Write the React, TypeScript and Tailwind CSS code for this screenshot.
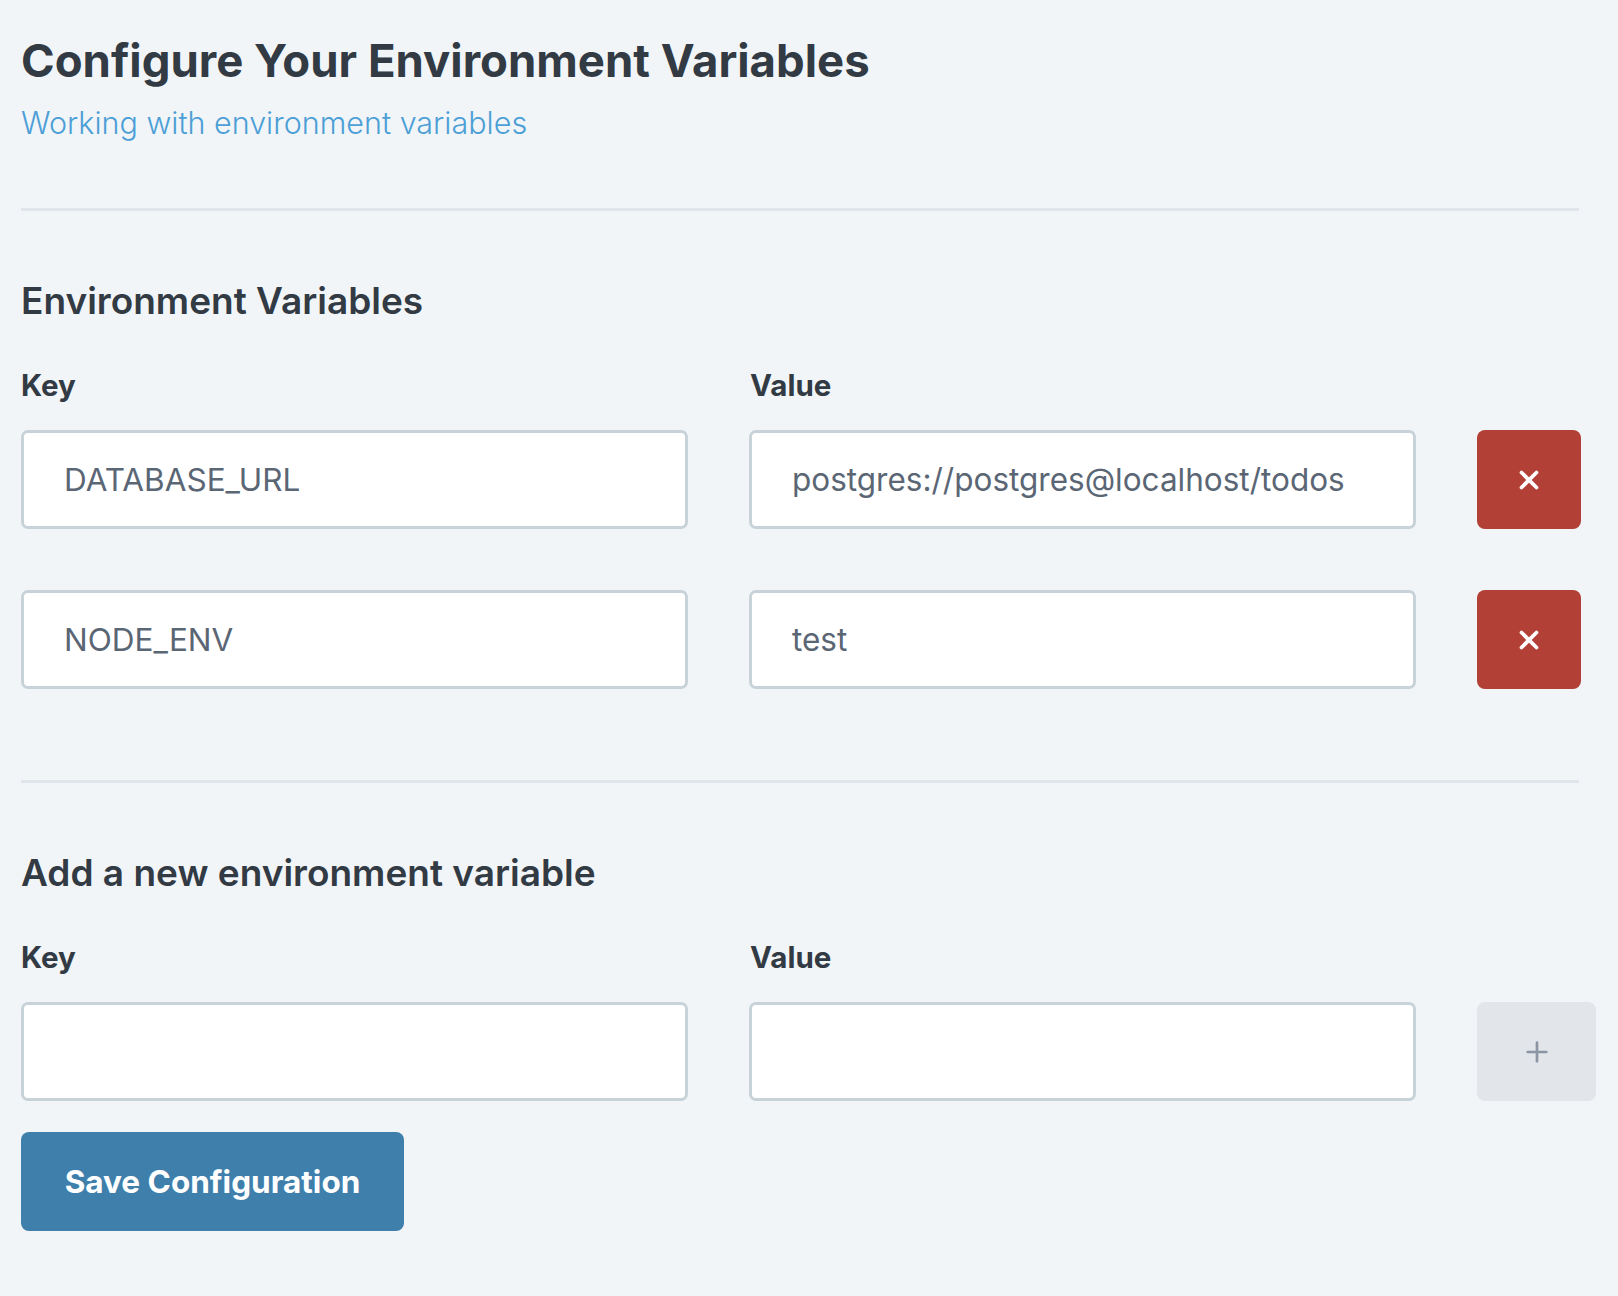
import { X, Plus } from 'lucide-react';

const rows = [
  { key: 'DATABASE_URL', value: 'postgres://postgres@localhost/todos' },
  { key: 'NODE_ENV', value: 'test' },
];

const inputCls =
  'w-[667px] h-[99px] bg-white border-[3px] border-[#c8d2d9] rounded-[7px] px-[40px] text-[31.5px] text-[#5b6675] outline-none';

export default function App() {
  return (
    <main
      className="min-h-screen bg-[#f1f5f8] px-[21px] pt-[37px] pb-[60px] text-[#323a44]"
      style={{ fontFamily: 'Inter, "Noto Sans", sans-serif' }}
    >
      {/* Header */}
      <h1 className="text-[45.5px] leading-[48px] font-bold">
        Configure Your Environment Variables
      </h1>
      <p className="mt-[20px] text-[30.5px] leading-[36px] font-light text-[#4c9fd6]">
        Working with environment variables
      </p>

      <div className="mt-[67px] h-[3px] w-[1558px] bg-[#dfe5ea]" />

      {/* Existing variables */}
      <h2 className="mt-[70px] text-[37px] leading-[40px] font-semibold">Environment Variables</h2>
      <div className="mt-[48px] flex gap-[62px] text-[29.5px] leading-[32px] font-bold">
        <span className="w-[667px]">Key</span>
        <span>Value</span>
      </div>

      <div className="mt-[29px] flex flex-col gap-[61px]">
        {rows.map((r) => (
          <div key={r.key} className="flex items-center gap-[61px]">
            <input className={inputCls} defaultValue={r.key} />
            <input className={inputCls} defaultValue={r.value} />
            <button className="w-[104px] h-[99px] rounded-[8px] bg-[#b24036] flex items-center justify-center text-white">
              <X size={30} strokeWidth={3} />
            </button>
          </div>
        ))}
      </div>

      <div className="mt-[91px] h-[3px] w-[1558px] bg-[#dfe5ea]" />

      {/* New variable */}
      <h2 className="mt-[70px] text-[37px] leading-[40px] font-semibold">Add a new environment variable</h2>
      <div className="mt-[48px] flex gap-[62px] text-[29.5px] leading-[32px] font-bold">
        <span className="w-[667px]">Key</span>
        <span>Value</span>
      </div>
      <div className="mt-[29px] flex items-center gap-[61px]">
        <input className={inputCls} />
        <input className={inputCls} />
        <button className="w-[119px] h-[99px] rounded-[8px] bg-[#e2e6ea] flex items-center justify-center text-[#8b95a3]">
          <Plus size={32} strokeWidth={2} />
        </button>
      </div>

      <button className="mt-[31px] h-[99px] w-[383px] rounded-[8px] bg-[#3f7fac] text-white text-[31.5px] font-bold">
        Save Configuration
      </button>
    </main>
  );
}
